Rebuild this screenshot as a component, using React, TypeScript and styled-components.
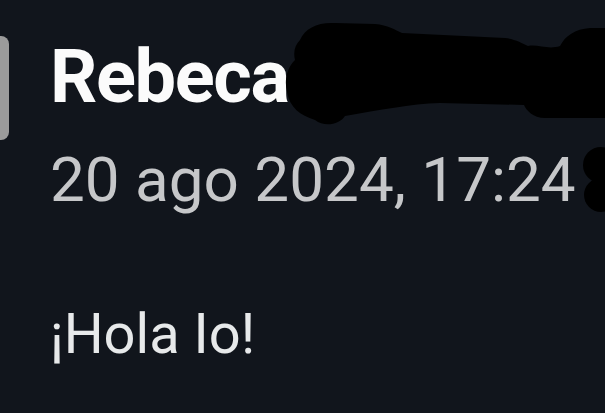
import React from "react";
import styled, { createGlobalStyle } from "styled-components";

const Global = createGlobalStyle`
  html, body { margin: 0; padding: 0; background: #11151c; }
  body { font-family: Roboto, "Noto Sans", "Liberation Sans", sans-serif; }
  #root { min-height: 100vh; }
`;

const Page = styled.div`
  position: relative;
  width: 605px;
  height: 413px;
  overflow: hidden;
  background: #11151c;
`;

const Header = styled.div`
  display: flex;
  align-items: flex-start;
  gap: 41px;
  padding-top: 36px;
`;

const Avatar = styled.div`
  width: 9px;
  height: 104px;
  flex: none;
  background: #9b9b9b;
  border-radius: 0 8px 8px 0;
`;

const Meta = styled.div`
  display: flex;
  flex-direction: column;
`;

const Name = styled.div`
  margin-top: 4px;
  font-size: 74px;
  line-height: 74px;
  font-weight: 700;
  letter-spacing: -1.4px;
  color: #fbfbfb;
  white-space: nowrap;
`;

const Time = styled.div`
  margin-top: 35px;
  font-size: 62px;
  line-height: 62px;
  font-weight: 400;
  color: #c6c7c9;
  white-space: nowrap;
`;

const Message = styled.div`
  margin-top: 95px;
  font-size: 56px;
  line-height: 56px;
  font-weight: 400;
  color: #e7e9ea;
  white-space: nowrap;
`;

const Redaction = styled.svg`
  position: absolute;
  left: 0;
  top: 0;
  pointer-events: none;
`;

export default function App() {
  return (
    <>
      <Global />
      <Page>
        <Header>
          <Avatar />
          <Meta>
            <Name>Rebeca</Name>
            <Time>20 ago 2024, 17:24</Time>
            <Message>¡Hola Io!</Message>
          </Meta>
        </Header>
        <Redaction width="605" height="413" viewBox="0 0 605 413">
          <path
            fill="#000"
            d="M300,40 C305,28 318,22 335,23 L375,24 C388,25 395,30 402,33 L505,38 C515,39 522,43 528,46 C538,44 548,50 560,46 C565,36 575,29 590,28 L605,28 L605,118 L545,118 C533,118 526,110 524,105 L440,103 C410,104 380,110 345,116 C340,124 325,128 315,120 C300,115 290,108 287,92 C284,80 287,68 295,60 C293,52 295,45 300,40 Z"
          />
          <circle cx="601" cy="165" r="18" fill="#000" />
          <circle cx="601" cy="195" r="17" fill="#000" />
        </Redaction>
      </Page>
    </>
  );
}
